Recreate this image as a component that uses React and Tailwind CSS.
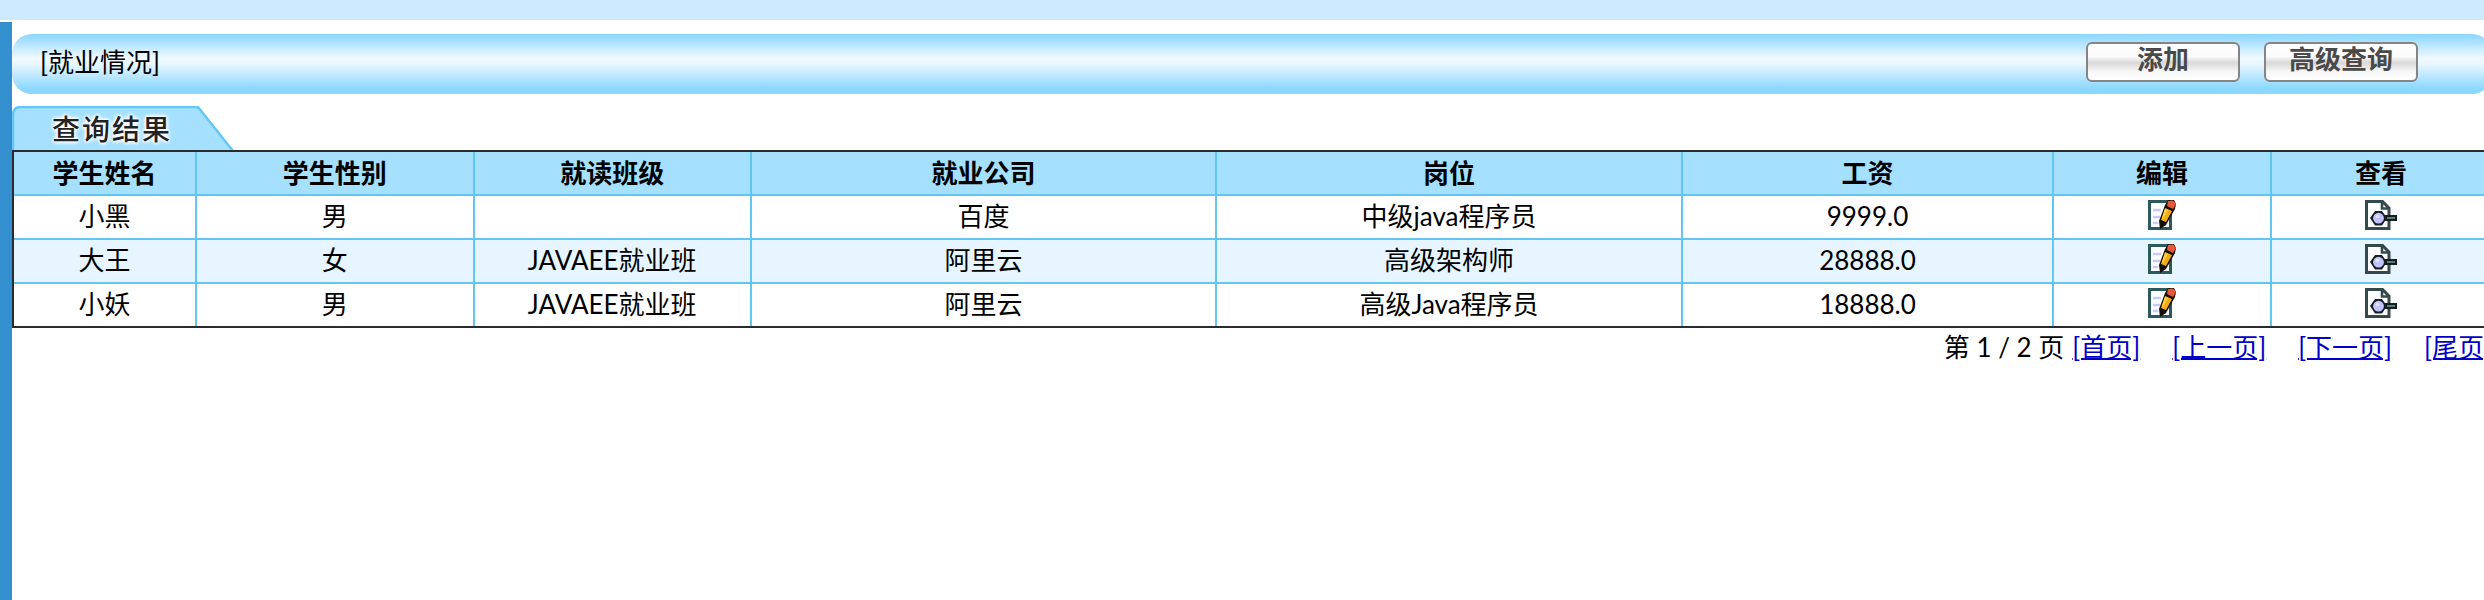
const columns = [
  ['学生姓名', 'w-[7.4%]'],
  ['学生性别', 'w-[11.2%]'],
  ['就读班级', 'w-[11.2%]'],
  ['就业公司', 'w-[18.8%]'],
  ['岗位', 'w-[18.8%]'],
  ['工资', 'w-[15%]'],
  ['编辑', 'w-[8.8%]'],
  ['查看', 'w-[8.8%]'],
];

const students = [
  ['小黑', '男', '', '百度', '中级java程序员', '9999.0'],
  ['大王', '女', 'JAVAEE就业班', '阿里云', '高级架构师', '28888.0'],
  ['小妖', '男', 'JAVAEE就业班', '阿里云', '高级Java程序员', '18888.0'],
];

const pages = ['[首页]', '[上一页]', '[下一页]', '[尾页]'];

function EditIcon() {
  return (
    <svg viewBox="0 0 28 30" className="block h-[30px] w-7" aria-hidden="true">
      <path d="M1.500 1.500H22.500V28.500H1.500Z" fill="#fff" stroke="#2c5a5c" strokeWidth="3" />
      <path d="M5 10H13M5 17H12M5 23H10" stroke="#c9c7ff" strokeWidth="2.400" />
      <path d="M17 5L20 0H26L28 4L27 9L18 25L12 29L11 21Z" fill="#141008" />
      <path d="M17 8L24 11L18 22L13 20Z" fill="#f2ac14" />
      <path d="M17 9L20 10L15 19L14 18Z" fill="#ffcf45" />
      <path d="M20 1L25 0.500L28 4L25 9L19 6Z" fill="#e8573a" />
    </svg>
  );
}

function ViewIcon() {
  return (
    <svg viewBox="0 0 32 30" className="block h-[30px] w-8" aria-hidden="true">
      <path d="M1.500 1.500H17.500L24 8V28.500H1.500Z" fill="#fff" stroke="#33494b" strokeWidth="3" />
      <path d="M17 1V8.500H24" fill="none" stroke="#33494b" strokeWidth="2.600" />
      <path d="M20 15H32V21H20Z" fill="#141f20" />
      <path d="M22 18H30" stroke="#5d7c7c" strokeWidth="2" />
      <path d="M5 18L10 11H17L22 18L17 25.500H10Z" fill="#141f20" />
      <circle cx="13.500" cy="18.200" r="5.400" fill="#c4c2ff" />
      <circle cx="12.500" cy="16.500" r="1.800" fill="#e6e5ff" />
    </svg>
  );
}

function ToolButton({ children }) {
  return (
    <button
      type="button"
      className="flex h-10 w-[154px] justify-center rounded-md border-2 border-[#858585] bg-[linear-gradient(180deg,#fff_0%,#fbfbfb_35%,#d9d7d7_52%,#f6f6f6_75%,#fff_100%)] text-[26px] leading-[30px] font-bold text-[#4a4a4a]"
    >
      {children}
    </button>
  );
}

export default function App() {
  return (
    <div className="flex min-h-screen flex-col overflow-hidden bg-white font-['Lato','Noto_Sans_CJK_SC',sans-serif] text-[26px] leading-[38px] text-black">
      <div className="h-5 bg-[#cdeaff]" />
      <div className="mt-0.5 flex flex-1">
        <aside className="w-3 shrink-0 bg-[#338fce]" />
        <main className="-mr-2 min-w-0 flex-1 pt-3">
          <header className="flex h-[60px] items-center justify-between rounded-[20px] bg-[linear-gradient(180deg,#8ad6ff_0%,#f0f9ff_40%,#eaf7ff_50%,#8ad7ff_92%,#8ad7ff_100%)] pr-[74px] pb-1 pl-7">
            <h1>[就业情况]</h1>
            <div className="flex gap-6">
              <ToolButton>添加</ToolButton>
              <ToolButton>高级查询</ToolButton>
            </div>
          </header>
          <div className="relative mt-3 h-11 w-56">
            <svg viewBox="0 0 224 44" className="absolute inset-0 size-full" aria-hidden="true">
              <path d="M1 45V9Q1 1 9 1H186L221 45" fill="#a5e0ff" stroke="#62c6f8" strokeWidth="2.400" />
            </svg>
            <h2 className="relative pl-10 text-[28px] leading-[46px] font-medium tracking-[2px] text-[#222] [text-shadow:0_0_2px_#fff,0_0_3px_#fff,0_0_4px_#fff,0_0_4px_#fff,0_0_5px_#fff]">
              查询结果
            </h2>
          </div>
          <table className="w-full table-fixed border-separate border-spacing-0 border-2 border-[#2b2b2f] text-center">
            <thead>
              <tr>
                {columns.map(([name, width]) => (
                  <th
                    key={name}
                    scope="col"
                    className={`${width} h-11 border-r-2 border-b-2 border-[#62c6f4] bg-[#a5e0ff] p-0 font-bold last:border-r-0`}
                  >
                    {name}
                  </th>
                ))}
              </tr>
            </thead>
            <tbody className="[&_td]:h-11 [&_td]:border-r-2 [&_td]:border-b-2 [&_td]:border-[#62c6f4] [&_td]:p-0 [&_td]:pb-0.5 [&_td:last-child]:border-r-0 [&_tr:last-child_td]:h-[42px] [&_tr:last-child_td]:border-b-0">
              {students.map((student) => (
                <tr key={student[0]} className="even:bg-[#e6f5ff]">
                  {student.map((value, i) => (
                    <td key={columns[i][0]}>{value}</td>
                  ))}
                  <td>
                    <a href="#edit" aria-label={`编辑${student[0]}`} className="mx-auto mb-0.5 block w-7">
                      <EditIcon />
                    </a>
                  </td>
                  <td>
                    <a href="#view" aria-label={`查看${student[0]}`} className="mx-auto mb-0.5 block w-8">
                      <ViewIcon />
                    </a>
                  </td>
                </tr>
              ))}
            </tbody>
          </table>
          <nav className="flex justify-end whitespace-nowrap">
            <span className="mr-2">第 1 / 2 页</span>
            <div className="flex gap-8">
              {pages.map((page) => (
                <a key={page} href="#page" className="text-[#0000c8] underline decoration-2">
                  {page}
                </a>
              ))}
            </div>
          </nav>
        </main>
      </div>
    </div>
  );
}
